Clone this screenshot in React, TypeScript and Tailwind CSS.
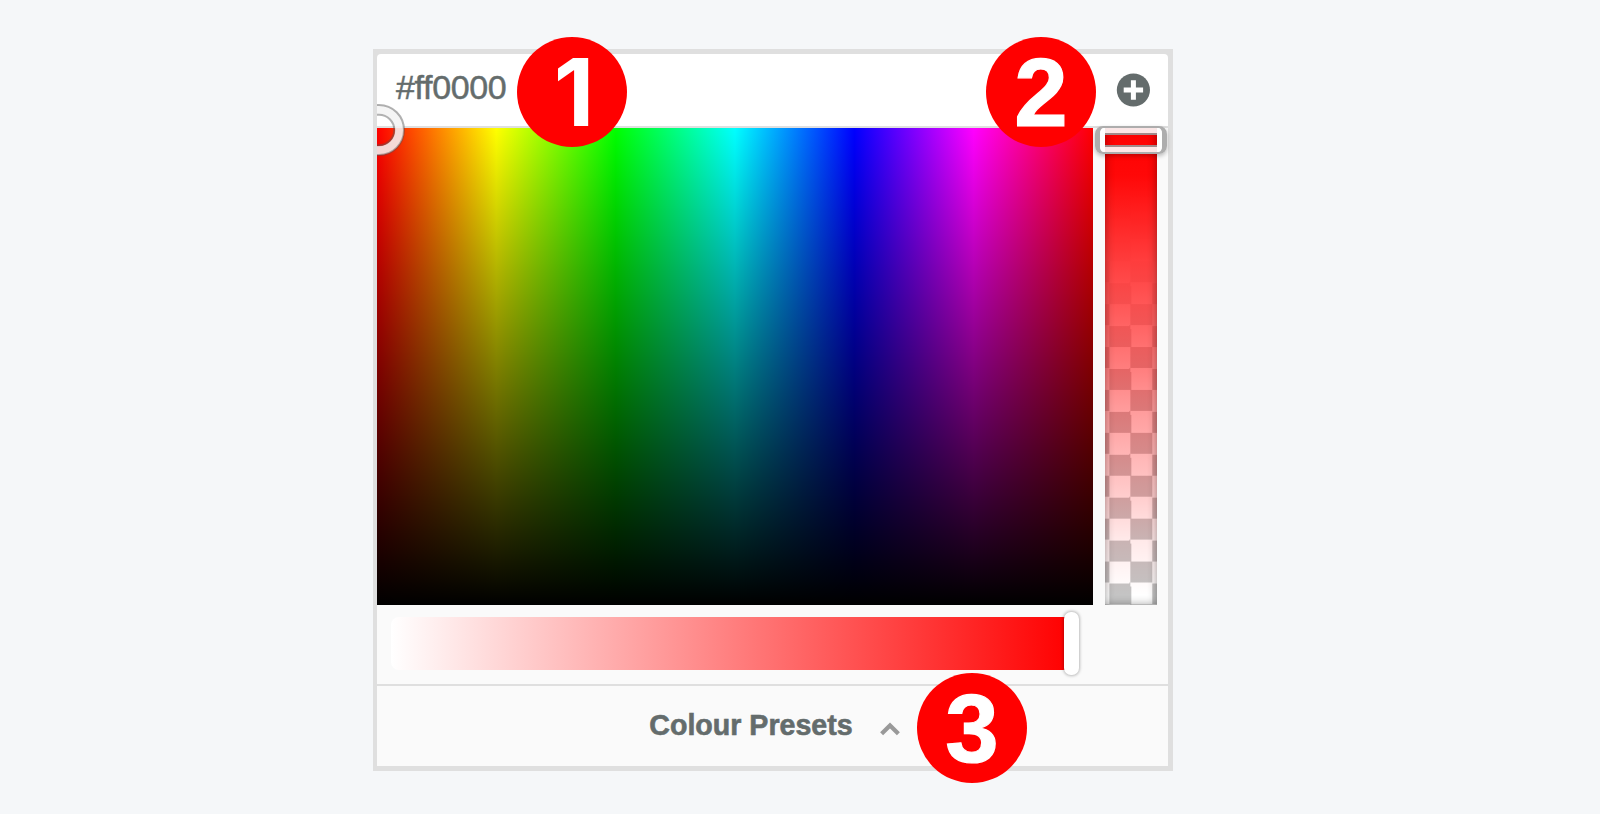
type BadgeProps = { label: string; place: string; type?: string };

function Badge({ label, place, type = "top-[0.5px] text-[96px] [-webkit-text-stroke:1.2px_white]" }: BadgeProps) {
  return (
    <div className={`absolute z-20 flex size-[110px] items-center justify-center rounded-full bg-[#ff0000] ${place}`}>
      <span className={`relative leading-none font-bold text-white ${type}`}>{label}</span>
    </div>
  );
}

function PlusIcon() {
  return (
    <svg width="34" height="34" viewBox="0 0 34 34">
      <circle cx="17.4" cy="17" r="16.6" fill="#646c6c" />
      <path d="M7.7 17h19.4M17.4 7.2v19.6" stroke="#fff" strokeWidth="5" />
    </svg>
  );
}

function HueField() {
  return (
    <div className="relative h-[477px] w-[716px] bg-[linear-gradient(to_bottom,transparent,#000),linear-gradient(to_right,#f00,#ff0,#0f0,#0ff,#00f,#f0f,#f00)]">
      <div className="absolute -top-6 left-0 h-[52px] w-7 overflow-hidden">
        <svg width="28" height="52" viewBox="0 0 28 52">
          <circle cx="2" cy="26" r="20.5" fill="none" stroke="#f4f4f4" strokeOpacity="0.88" strokeWidth="9" />
          <circle cx="2" cy="26" r="25" fill="none" stroke="#555" strokeOpacity="0.45" strokeWidth="2" />
          <circle cx="2" cy="26" r="15.3" fill="none" stroke="#555" strokeOpacity="0.45" strokeWidth="2" />
        </svg>
      </div>
    </div>
  );
}

function AlphaStrip() {
  return (
    <div className="relative h-[477px] w-[52px]">
      <div className="h-full w-full bg-white bg-[conic-gradient(#c4c4c4_25%,#fff_0_50%,#c4c4c4_0_75%,#fff_0)] bg-[length:42.92px_42.92px] bg-[position:4.4px_4.5px]">
        <div className="h-full w-full bg-[linear-gradient(to_bottom,#f00,#ff0808_10%,rgba(255,58,58,0.98)_28%,rgba(255,58,58,0.84)_38%,rgba(255,30,30,0.58)_50%,rgba(255,10,10,0.42)_58%,rgba(255,0,0,0.2)_77%,rgba(255,0,0,0.09)_86%,rgba(255,0,0,0)_98%)] shadow-[inset_0_0_10px_rgba(0,0,0,0.4)]" />
      </div>
      <div className="absolute -top-0.5 -left-2.5 h-7 w-[72px] rounded-[8px] border-x-[5px] border-y-2 border-[#adadad] shadow-[0_2px_4px_rgba(0,0,0,0.25)]">
        <div className="h-full w-full rounded-[5px] border-[5px] border-white/90">
          <div className="h-full w-full border-y-2 border-[#999]/90" />
        </div>
      </div>
    </div>
  );
}

function SaturationBar() {
  return (
    <div className="relative h-[53px] w-[680px] rounded-[8px] bg-[linear-gradient(to_right,#fff,#f00)]">
      <div className="absolute -top-[5px] right-[-8px] h-[63px] w-[15px] rounded-[7px] bg-white shadow-[0_0_3px_1px_rgba(0,0,0,0.25)]" />
    </div>
  );
}

export default function App() {
  return (
    <div className="flex h-[814px] w-full justify-center bg-[#f5f7f9] pt-[49px] pr-[54px] font-['Liberation_Sans',Arial,sans-serif]">
      <div className="relative flex h-[722px] w-[800px] flex-col border-x-4 border-y-[5px] border-r-[5px] border-[#dfdfdf] bg-[#dfdfdf]">
        <div className="flex h-[74px] shrink-0 items-center justify-between rounded-t-[4px] border-b-2 border-[#dfdfdf] bg-white pr-[18px] pl-[19px]">
          <span className="relative -top-[3px] text-[34px] leading-none tracking-[-0.35px] text-[#646c6c] [-webkit-text-stroke:0.5px_#646c6c]">
            #ff0000
          </span>
          <PlusIcon />
        </div>
        <div className="flex h-[556px] flex-col bg-[#fafafa]">
          <div className="flex gap-3">
            <HueField />
            <AlphaStrip />
          </div>
          <div className="pt-3 pl-[14px]">
            <SaturationBar />
          </div>
        </div>
        <div className="flex grow items-center justify-center border-t-2 border-[#dfdfdf] bg-[#fafafa] pl-[4px]">
          <span className="relative -top-px text-[28.6px] leading-none font-bold text-[#646c6c] [-webkit-text-stroke:0.6px_#646c6c]">
            Colour Presets
          </span>
          <svg className="relative top-[3px] ml-[27px]" width="20" height="14" viewBox="0 0 20 14">
            <path d="M1.6 11.8 10 3.4l8.4 8.4" fill="none" stroke="#999" strokeWidth="4.2" />
          </svg>
        </div>
        <Badge label="1" place="-top-[17px] left-[140px]" type="left-[2px] font-['Inter','Liberation_Sans',sans-serif] text-[94px]" />
        <Badge label="2" place="-top-[17px] left-[609px]" />
        <Badge label="3" place="top-[619px] left-[540px]" />
      </div>
    </div>
  );
}
